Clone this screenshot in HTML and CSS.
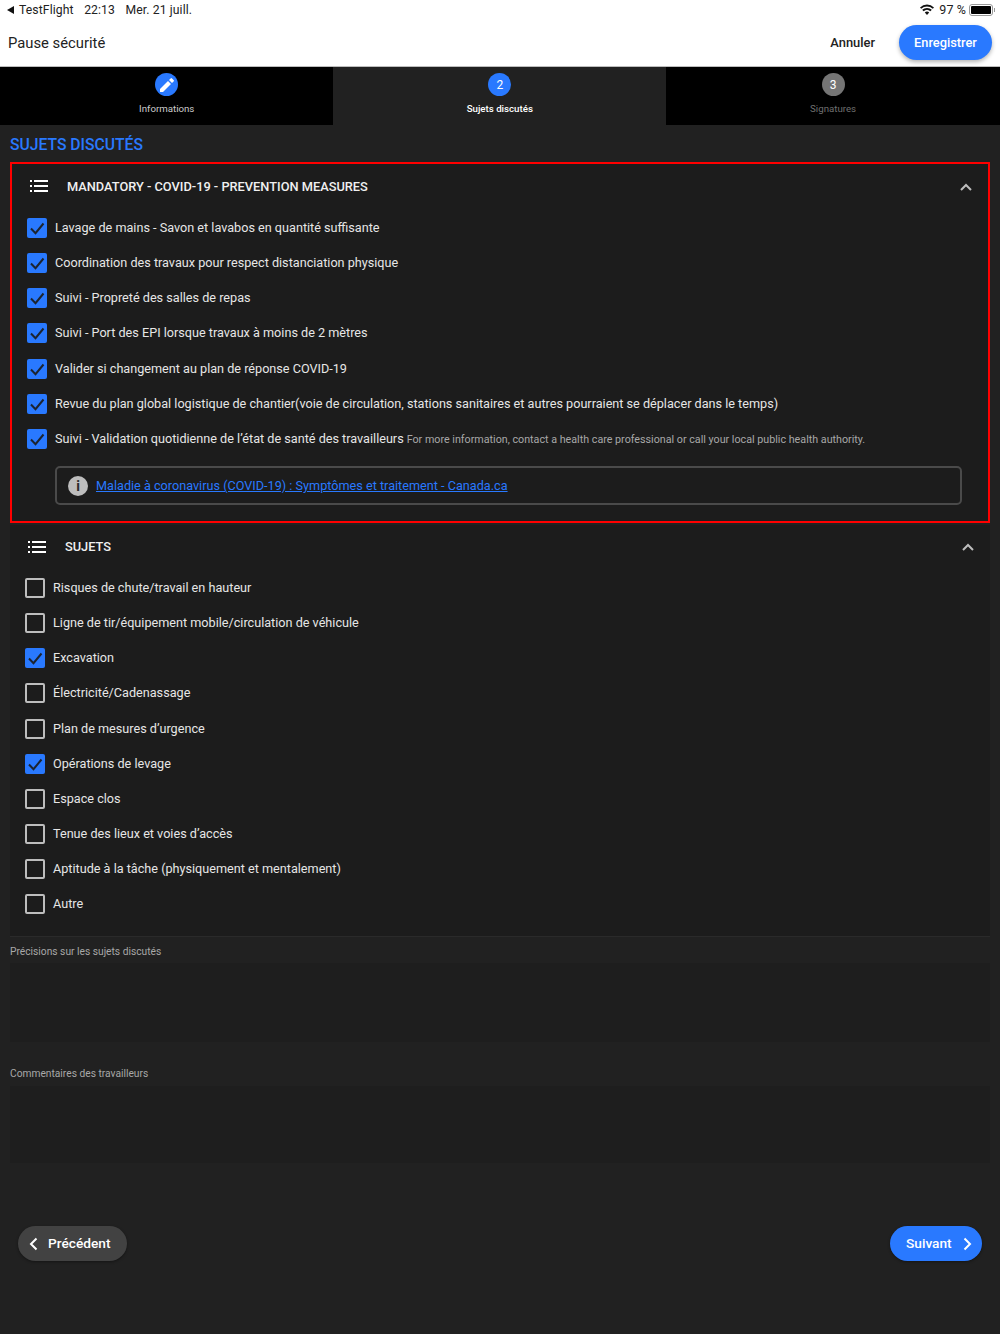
FILE: index.html
```html
<!DOCTYPE html>
<html lang="fr">
<head>
    <meta charset="UTF-8">
    <meta name="viewport" content="width=device-width, initial-scale=1.0">
    <title>Pause sécurité</title>
    <link rel="stylesheet" href="styles.css">
</head>
<body>
    <svg class="defs" width="0" height="0">
        <symbol id="list" viewBox="0 0 18 12">
            <path d="M0 0h2v2H0zM0 5h2v2H0zM0 10h2v2H0zM4 0h14v2H4zM4 5h14v2H4zM4 10h14v2H4z" fill="#fff"/>
        </symbol>
        <symbol id="up" viewBox="0 0 12 8">
            <path d="M1 7l5-5 5 5" fill="none" stroke="#bdbdbd" stroke-width="2"/>
        </symbol>
        <symbol id="tick" viewBox="0 0 20 20">
            <path d="M4 10.500l4.500 4.700 8-9.700" fill="none" stroke="#1c2430" stroke-width="2"/>
        </symbol>
    </svg>

    <div class="status">
        <div class="status-left">
            <span class="back-arrow"></span>
            <span>TestFlight</span>
            <span class="status-gap">22:13</span>
            <span class="status-gap">Mer. 21 juill.</span>
        </div>
        <div class="status-right">
            <svg class="wifi" width="14" height="11" viewBox="0 0 14 11">
                <path d="M7 11L4.800 8.600a3.200 3.200 0 0 1 4.400 0zM3.600 7.300L2.200 5.800a7 7 0 0 1 9.600 0l-1.400 1.500a5 5 0 0 0-6.800 0zM1.200 4.800L0 3.400a10.200 10.200 0 0 1 14 0l-1.200 1.400a8.400 8.400 0 0 0-11.600 0z" fill="#111"/>
            </svg>
            <span>97 %</span>
            <span class="battery"><span class="battery-fill"></span></span>
            <span class="battery-nub"></span>
        </div>
    </div>

    <header class="topbar">
        <div class="page-title">Pause sécurité</div>
        <div class="actions">
            <button class="btn-text">Annuler</button>
            <button class="btn-save">Enregistrer</button>
        </div>
    </header>

    <nav class="steps">
        <div class="step">
            <span class="step-dot">
                <svg width="14" height="14" viewBox="0 0 14 14"><path d="M0 11v3h3l8-8-3-3zM9 2l3 3 1.600-1.600a1 1 0 0 0 0-1.400L12 .4a1 1 0 0 0-1.400 0z" fill="#fff"/></svg>
            </span>
            <span class="step-label">Informations</span>
        </div>
        <div class="step active">
            <span class="step-dot">2</span>
            <span class="step-label">Sujets discutés</span>
        </div>
        <div class="step off">
            <span class="step-dot">3</span>
            <span class="step-label">Signatures</span>
        </div>
    </nav>

    <main class="content">
        <h1 class="section-title">SUJETS DISCUTÉS</h1>

        <section class="panel panel-red">
            <div class="panel-head">
                <svg class="list-icon"><use href="#list"/></svg>
                <span class="panel-title">MANDATORY - COVID-19 - PREVENTION MEASURES</span>
                <svg class="chevron"><use href="#up"/></svg>
            </div>
            <div class="row"><span class="box on"><svg><use href="#tick"/></svg></span>Lavage de mains - Savon et lavabos en quantité suffisante</div>
            <div class="row"><span class="box on"><svg><use href="#tick"/></svg></span>Coordination des travaux pour respect distanciation physique</div>
            <div class="row"><span class="box on"><svg><use href="#tick"/></svg></span>Suivi - Propreté des salles de repas</div>
            <div class="row"><span class="box on"><svg><use href="#tick"/></svg></span>Suivi - Port des EPI lorsque travaux à moins de 2 mètres</div>
            <div class="row"><span class="box on"><svg><use href="#tick"/></svg></span>Valider si changement au plan de réponse COVID-19</div>
            <div class="row"><span class="box on"><svg><use href="#tick"/></svg></span>Revue du plan global logistique de chantier(voie de circulation, stations sanitaires et autres pourraient se déplacer dans le temps)</div>
            <div class="row"><span class="box on"><svg><use href="#tick"/></svg></span>Suivi - Validation quotidienne de l’état de santé des travailleurs<small>For more information, contact a health care professional or call your local public health authority.</small></div>
            <div class="info">
                <span class="info-icon">i</span>
                <a href="#">Maladie à coronavirus (COVID-19) : Symptômes et traitement - Canada.ca</a>
            </div>
        </section>

        <section class="panel panel-plain">
            <div class="panel-head">
                <svg class="list-icon"><use href="#list"/></svg>
                <span class="panel-title">SUJETS</span>
                <svg class="chevron"><use href="#up"/></svg>
            </div>
            <div class="row"><span class="box"></span>Risques de chute/travail en hauteur</div>
            <div class="row"><span class="box"></span>Ligne de tir/équipement mobile/circulation de véhicule</div>
            <div class="row"><span class="box on"><svg><use href="#tick"/></svg></span>Excavation</div>
            <div class="row"><span class="box"></span>Électricité/Cadenassage</div>
            <div class="row"><span class="box"></span>Plan de mesures d’urgence</div>
            <div class="row"><span class="box on"><svg><use href="#tick"/></svg></span>Opérations de levage</div>
            <div class="row"><span class="box"></span>Espace clos</div>
            <div class="row"><span class="box"></span>Tenue des lieux et voies d’accès</div>
            <div class="row"><span class="box"></span>Aptitude à la tâche (physiquement et mentalement)</div>
            <div class="row"><span class="box"></span>Autre</div>
        </section>

        <div class="field field-first">
            <label>Précisions sur les sujets discutés</label>
            <div class="area area-tall"></div>
        </div>
        <div class="field field-second">
            <label>Commentaires des travailleurs</label>
            <div class="area area-short"></div>
        </div>

        <div class="pager">
            <button class="btn-nav btn-prev">
                <svg width="9" height="14" viewBox="0 0 9 14"><path d="M7.500 1.500L2 7l5.500 5.500" fill="none" stroke="#fff" stroke-width="2"/></svg>
                <span class="nav-text">Précédent</span>
            </button>
            <button class="btn-nav btn-next">
                <span class="nav-text">Suivant</span>
                <svg width="9" height="14" viewBox="0 0 9 14"><path d="M1.500 1.500L7 7l-5.500 5.500" fill="none" stroke="#fff" stroke-width="2"/></svg>
            </button>
        </div>
    </main>
</body>
</html>
```

FILE: styles.css
```css
* {
    box-sizing: border-box;
}

body {
    margin: 0;
    height: 1334px;
    overflow: hidden;
    font-family: Roboto, "Liberation Sans", sans-serif;
    color: #e6e6e6;
    background: #212121;
}

button {
    font-family: inherit;
    border: none;
}

.defs {
    display: block;
    height: 0;
}

/* Status bar */
.status {
    height: 20px;
    padding: 0 5px 1px 7px;
    display: flex;
    justify-content: space-between;
    align-items: center;
    background: #fff;
    color: #222;
    font-size: 12.500px;
    letter-spacing: 0.1px;
}

.status-left,
.status-right {
    display: flex;
    align-items: center;
}

.status-left {
    font-size: 12.200px;
}

.status-gap {
    margin-left: 10.500px;
}

.back-arrow {
    width: 0;
    height: 0;
    margin-right: 5px;
    border-top: 4px solid transparent;
    border-bottom: 4px solid transparent;
    border-right: 7px solid #111;
}

.wifi {
    margin-right: 5px;
}

.battery {
    width: 24px;
    height: 12px;
    margin-left: 3px;
    padding: 1px;
    border: 1px solid #999;
    border-radius: 3px;
}

.battery-fill {
    display: block;
    height: 100%;
    background: #000;
    border-radius: 1px;
}

.battery-nub {
    width: 1px;
    height: 4px;
    margin-left: 1px;
    background: #999;
}

/* Top bar */
.topbar {
    height: 47px;
    padding: 0 8px;
    display: flex;
    justify-content: space-between;
    align-items: center;
    background: #fff;
    border-bottom: 1px solid #bdbdbd;
}

.page-title {
    font-size: 14.800px;
    color: #222;
}

.actions {
    display: flex;
    align-items: center;
    gap: 24px;
    margin-top: -1px;
}

.btn-text {
    padding: 0;
    background: none;
    font-size: 12.900px;
    font-weight: 500;
    color: #222;
}

.btn-save {
    width: 93px;
    height: 35px;
    border-radius: 18px;
    background: #2979ff;
    color: #fff;
    font-size: 12.800px;
    font-weight: 500;
    box-shadow: 0 2px 4px rgba(0, 0, 0, 0.3);
}

/* Steps */
.steps {
    height: 58px;
    display: grid;
    grid-template-columns: 333.400px 332.800px 1fr;
    background: #000;
}

.step {
    display: flex;
    flex-direction: column;
    align-items: center;
    padding-top: 6px;
}

.step.active {
    background: #212121;
}

.step-dot {
    width: 23px;
    height: 23px;
    display: flex;
    align-items: center;
    justify-content: center;
    border-radius: 50%;
    background: #2979ff;
    color: #fff;
    font-size: 12px;
}

.step-label {
    margin-top: 7px;
    font-size: 9.700px;
    line-height: 12px;
    color: #ccc;
}

.step.active .step-label {
    color: #fff;
    font-weight: 500;
}

.step.off .step-dot {
    background: #757575;
}

.step.off .step-label {
    color: #707070;
}

/* Content */
.content {
    padding: 0 10px;
}

.section-title {
    margin: 0;
    height: 37px;
    line-height: 39px;
    font-size: 15.700px;
    font-weight: 500;
    color: #2979ff;
}

.panel {
    background: #1c1c1c;
}

.panel-red {
    height: 361px;
    padding: 0 16px 0 15px;
    border: 2px solid #f00;
}

.panel-plain {
    height: 412px;
    margin-top: 2px;
    padding: 0 16px 0 15px;
    border-bottom: 1px solid #2a2a2a;
}

.panel-head {
    height: 44px;
    display: flex;
    align-items: center;
    font-size: 12.800px;
    font-weight: 500;
    color: #f0f0f0;
}

.panel-plain .panel-head {
    height: 43px;
}

.list-icon {
    width: 18px;
    height: 12px;
    margin: 0 19px 0 3px;
}

.panel-title {
    flex: 1;
}

.chevron {
    width: 12px;
    height: 8px;
    margin-top: 1px;
}

.row {
    height: 35.150px;
    padding-bottom: 1px;
    display: flex;
    align-items: center;
    font-size: 12.650px;
    white-space: nowrap;
    color: #e6e6e6;
}

.panel-red .panel-head + .row {
    margin-top: 2.500px;
}

.panel-plain .panel-head + .row {
    margin-top: 2.500px;
}

.row small {
    margin: 3px 0 0 3px;
    font-size: 10.730px;
    color: #a8a8a8;
}

.box {
    width: 20px;
    height: 20px;
    flex: none;
    margin: 1px 8px 0 0;
    border: 2px solid #bdbdbd;
    border-radius: 2px;
}

.box.on {
    border: none;
    background: #2979ff;
}

.box svg {
    display: block;
    width: 20px;
    height: 20px;
}

/* Info link */
.info {
    height: 39px;
    margin: 10px 10px 0 28px;
    padding-left: 11px;
    display: flex;
    align-items: center;
    gap: 8px;
    border: 2px solid #4a4a4a;
    border-radius: 5px;
    font-size: 12.660px;
}

.info-icon {
    width: 20px;
    height: 20px;
    display: flex;
    align-items: center;
    justify-content: center;
    border-radius: 50%;
    background: #bdbdbd;
    color: #2a2a2a;
    font-size: 14px;
    font-weight: 700;
}

.info a {
    color: #2979ff;
}

/* Text fields */
.field label {
    display: block;
    font-size: 10.220px;
    line-height: 12px;
    color: #a8a8a8;
}

.field-first {
    padding-top: 9px;
}

.field-second {
    margin-top: 26px;
}

.area {
    margin-top: 5px;
    background: #1e1e1e;
}

.area-tall {
    height: 79px;
}

.area-short {
    height: 77px;
    margin-top: 6px;
}

/* Prev / next */
.pager {
    margin-top: 63px;
    padding: 0 8px;
    display: flex;
    justify-content: space-between;
}

.btn-nav {
    height: 35px;
    display: flex;
    align-items: center;
    border-radius: 18px;
    color: #fff;
    font-size: 13.700px;
    font-weight: 500;
    box-shadow: 0 1px 3px rgba(0, 0, 0, 0.4);
}

.nav-text {
    margin-bottom: 2px;
}

.btn-prev {
    width: 109px;
    padding-left: 11px;
    gap: 10px;
    background: #424242;
}

.btn-next {
    width: 92px;
    padding-left: 16px;
    gap: 11px;
    background: #2979ff;
}
```
